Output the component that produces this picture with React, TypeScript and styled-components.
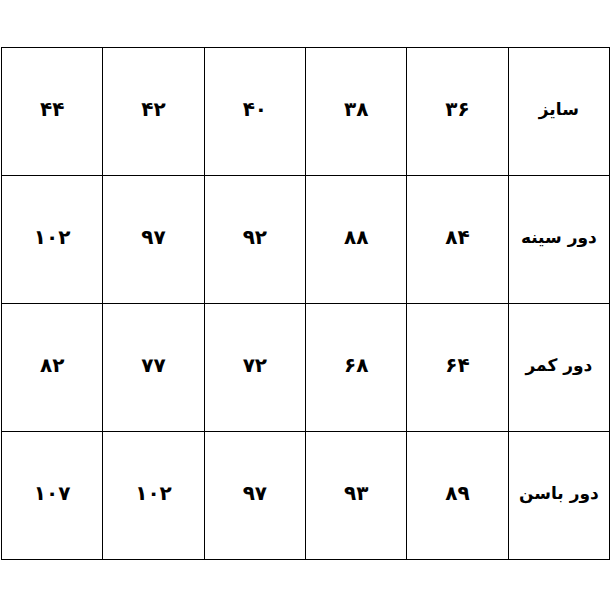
import React from 'react'
import styled, { createGlobalStyle } from 'styled-components'

const GlobalStyle = createGlobalStyle`
  body {
    margin: 0;
    background: #ffffff;
    font-family: "DejaVu Sans", sans-serif;
  }
`

const Page = styled.div`
  width: 612px;
  height: 612px;
  padding: 47px 0 0 1px;
  box-sizing: border-box;
`

const Table = styled.table`
  direction: rtl;
  border-collapse: collapse;
  width: 609px;
  height: 513px;
  table-layout: fixed;
  border-top: 1px solid #8a8a8a;
  border-left: 1px solid #6a6a6a;
  border-right: 1px solid #6a6a6a;
`

const Row = styled.tr`
  height: 128px;
`

const Cell = styled.td<{ $label?: boolean }>`
  border: 1px solid #000000;
  text-align: center;
  vertical-align: middle;
  padding: 0 0 6px 0;
  font-family: "DejaVu Sans", sans-serif;
  font-weight: bold;
  font-size: ${(p) => (p.$label ? '17px' : '20px')};
  letter-spacing: ${(p) => (p.$label ? '0' : '-1px')};
  color: #000000;
`

const rows: string[][] = [
  ['سایز', '۳۶', '۳۸', '۴۰', '۴۲', '۴۴'],
  ['دور سینه', '۸۴', '۸۸', '۹۲', '۹۷', '۱۰۲'],
  ['دور کمر', '۶۴', '۶۸', '۷۲', '۷۷', '۸۲'],
  ['دور باسن', '۸۹', '۹۳', '۹۷', '۱۰۲', '۱۰۷'],
]

const App = (): JSX.Element => (
  <>
    <GlobalStyle />
    <Page>
      <Table>
        <tbody>
          {rows.map((row) => (
            <Row key={row[0]}>
              {row.map((v, i) => (
                <Cell key={i} $label={i === 0}>
                  {v}
                </Cell>
              ))}
            </Row>
          ))}
        </tbody>
      </Table>
    </Page>
  </>
)

export default App
